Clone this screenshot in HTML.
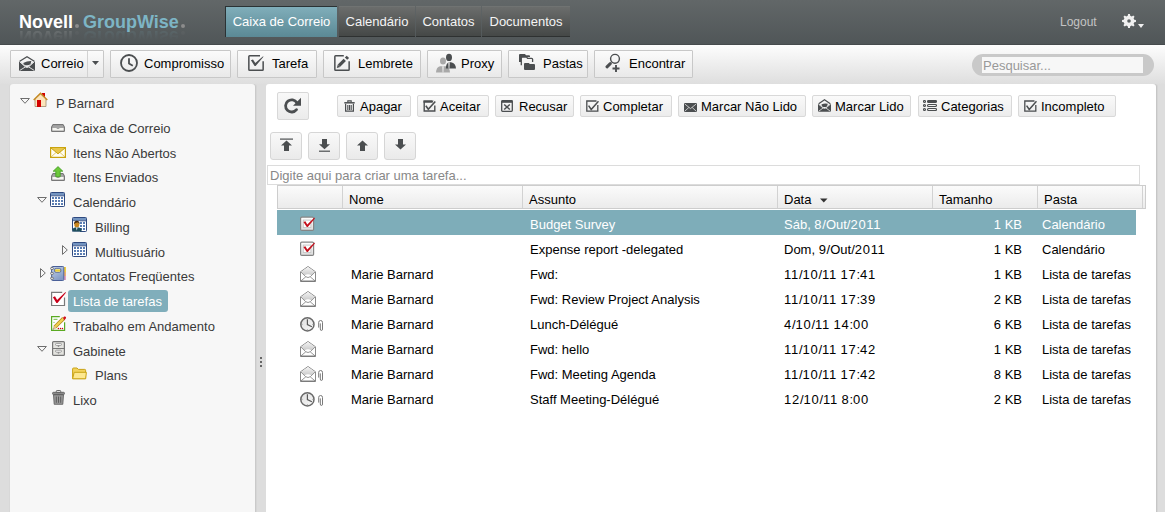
<!DOCTYPE html>
<html><head><meta charset="utf-8">
<style>
*{box-sizing:border-box}
html,body{margin:0;padding:0}
body{width:1165px;height:512px;overflow:hidden;position:relative;background:#dddddd;font-family:"Liberation Sans",sans-serif;font-size:13px;color:#000}
.a{position:absolute}
#hdr{left:0;top:0;width:1165px;height:45px;background:linear-gradient(#626768,#505658);border-bottom:1px solid #464b4d}
.logo{top:12px;font-weight:bold;font-size:18px;white-space:nowrap}
.tab{top:6px;height:31px;line-height:30px;color:#f4f4f4;font-size:13px;text-align:center;white-space:nowrap}
.tab.on{background:linear-gradient(#80aeba,#5b8995);border-left:1px solid #2b3234;border-top:1px solid #2b3234;color:#fff}
.tab.off{background:linear-gradient(#6b6d6c,#454847);border-bottom:1px solid #2e3131;border-top:1px solid #707372}
#tb{left:0;top:45px;width:1165px;height:39px;background:linear-gradient(#fdfdfd,#dedede)}
.btn{height:28px;border:1px solid #c8c8c8;border-radius:1px;background:linear-gradient(#fbfbfb,#e9e9e9);white-space:nowrap;line-height:25px}
.btn span{position:absolute;top:0}
.btn svg{position:absolute}
#left{left:10px;top:84px;width:245px;height:428px;background:#f7f7f7;border-radius:3px 3px 0 0;box-shadow:1px 0 0 #cacaca,2px 0 0 #d6d6d6,-1px 0 0 #d8d8d8}
#main{left:266px;top:84px;width:890px;height:428px;background:#fff;border-radius:3px 3px 0 0;box-shadow:1px 0 0 #c6c6c6,2px 0 0 #d5d5d5}
.ti{position:absolute;color:#3a3a3a;white-space:nowrap;line-height:15px}
.sbtn{height:22px;border:1px solid #d9d9d9;border-radius:2px;background:linear-gradient(#fafafa,#ececec);line-height:20px;white-space:nowrap}
.sbtn span{position:absolute;top:0}
.abtn{top:132px;width:32px;height:28px;border:1px solid #d6d6d6;border-radius:3px;background:linear-gradient(#f9f9f9,#eaeaea)}
.row{position:absolute;left:277px;width:859px;height:25px}
.row.sel{background:#7eadb9}
.c{position:absolute;top:0;line-height:15px;white-space:nowrap}
</style></head><body>
<div id="hdr" class="a"></div>
<div class="a logo" style="left:19px;color:#fff">Novell<span style="display:inline-block;width:4px;height:4px;border-radius:2px;background:#8c8c8c;margin:0 4px 0 2px;vertical-align:0px"></span><span style="color:#7db5c5">GroupWise</span><span style="display:inline-block;width:4px;height:4px;border-radius:2px;background:#8c8c8c;margin:0 0 0 2px;vertical-align:0px"></span></div>
<div class="a tab on" style="left:225px;width:112px">Caixa de Correio</div>
<div class="a tab off" style="left:339px;width:76px">Calendário</div>
<div class="a tab off" style="left:416px;width:65px">Contatos</div>
<div class="a tab off" style="left:482px;width:88px">Documentos</div>
<div class="a" style="left:1060px;top:15px;font-size:12px;color:#c4c4c4">Logout</div>
<svg class="a" style="left:1122px;top:14px" width="14" height="14" viewBox="0 0 14 14"><path d="M6.07 0.06 L7.93 0.06 L8.26 1.75 L9.82 2.40 L11.25 1.44 L12.56 2.75 L11.60 4.18 L12.25 5.74 L13.94 6.07 L13.94 7.93 L12.25 8.26 L11.60 9.82 L12.56 11.25 L11.25 12.56 L9.82 11.60 L8.26 12.25 L7.93 13.94 L6.07 13.94 L5.74 12.25 L4.18 11.60 L2.75 12.56 L1.44 11.25 L2.40 9.82 L1.75 8.26 L0.06 7.93 L0.06 6.07 L1.75 5.74 L2.40 4.18 L1.44 2.75 L2.75 1.44 L4.18 2.40 L5.74 1.75Z M7 5.2A1.8 1.8 0 1 0 7 8.8A1.8 1.8 0 1 0 7 5.2Z" fill="#f0f0f0" fill-rule="evenodd"/></svg><svg class="a" style="left:1138px;top:24px" width="6" height="4"><path d="M0 0H6L3 4Z" fill="#f0f0f0"/></svg>
<div class="a logo" style="left:19px;top:26px;color:#fff;transform:scaleY(-1);transform-origin:50% 50%;opacity:0.13;-webkit-mask-image:linear-gradient(to top,rgba(0,0,0,1) 20%,rgba(0,0,0,0) 68%)">Novell<span style="display:inline-block;width:4px;height:4px;border-radius:2px;background:#8c8c8c;margin:0 4px 0 2px;vertical-align:0px"></span><span style="color:#7db5c5">GroupWise</span><span style="display:inline-block;width:4px;height:4px;border-radius:2px;background:#8c8c8c;margin:0 0 0 2px;vertical-align:0px"></span></div>

<div id="tb" class="a"></div>


<!-- main toolbar -->
<div class="a btn" style="left:10px;top:50px;width:94px"></div>
<div class="a" style="left:87px;top:51px;width:1px;height:26px;background:#d2d2d2"></div>
<svg class="a" style="left:19px;top:56px" width="16" height="15" viewBox="0 0 16 15"><path d="M0.7 5.2 L8 0.8 L15.3 5.2" fill="none" stroke="#4b4e50" stroke-width="1.3"/><path d="M0 4.8 L6.3 10.6 Q8 11.8 9.7 10.6 L16 4.8 L16 15 L0 15Z" fill="#4b4e50"/><path d="M0.5 5.6 L6.4 10.9 Q8 12.1 9.6 10.9 L15.5 5.6 M0.5 14.6 L6.4 10.9 M15.5 14.6 L9.6 10.9" fill="none" stroke="#f2f2f2" stroke-width="0.9"/><path d="M4.2 7 Q8 5 12.3 5.1 L11.5 8.2 Q8.2 10.2 4.9 8.4Z" fill="#4b4e50"/></svg>
<div class="a" style="left:41px;top:56px;line-height:15px">Correio</div>
<svg class="a" style="left:92px;top:61px" width="7" height="4"><path d="M0 0H7L3.5 4Z" fill="#4b4e50"/></svg>

<div class="a btn" style="left:110px;top:50px;width:121px"></div>
<svg class="a" style="left:120px;top:54px" width="18" height="18" viewBox="0 0 18 18"><circle cx="9" cy="9" r="8" fill="none" stroke="#4b4e50" stroke-width="1.8"/><path d="M9 4.2V9.6L12.8 11.8" fill="none" stroke="#4b4e50" stroke-width="1.8"/></svg>
<div class="a" style="left:144px;top:56px;line-height:15px">Compromisso</div>

<div class="a btn" style="left:237px;top:50px;width:80px"></div>
<svg class="a" style="left:248px;top:54px" width="17" height="17" viewBox="0 0 17 17"><path d="M12 1.75H1.6Q0.85 1.75 0.85 2.5V15.4Q0.85 16.15 1.6 16.15H14.4Q15.15 16.15 15.15 15.4V7.2" fill="none" stroke="#4b4e50" stroke-width="1.5"/><path d="M2.9 6.3L5 5.6L7.3 9.1L15.4 2.1L15.1 3.3L7.6 11.9L6.6 12.1Z" fill="#4b4e50"/></svg>
<div class="a" style="left:272px;top:56px;line-height:15px">Tarefa</div>

<div class="a btn" style="left:323px;top:50px;width:98px"></div>
<svg class="a" style="left:334px;top:54px" width="17" height="17" viewBox="0 0 17 17"><path d="M9.8 1.75H1.6Q0.85 1.75 0.85 2.5V15.4Q0.85 16.15 1.6 16.15H14.4Q15.15 16.15 15.15 15.4V7.2" fill="none" stroke="#4b4e50" stroke-width="1.5"/><path d="M5 11.7L10.8 5.9" stroke="#4b4e50" stroke-width="3.3"/><path d="M3.8 10.5L6.2 12.9L2.8 14Z" fill="#4b4e50"/><path d="M12 4.7L13.9 2.8" stroke="#4b4e50" stroke-width="3.3"/></svg>
<div class="a" style="left:358px;top:56px;line-height:15px">Lembrete</div>

<div class="a btn" style="left:427px;top:50px;width:75px"></div>
<svg class="a" style="left:435px;top:53px" width="22" height="21" viewBox="0 0 22 21"><ellipse cx="8" cy="8" rx="3" ry="3.6" fill="#a9a9a9"/><path d="M1 19.6Q1.2 14 5 13.2H11Q14.8 14 15 19.6Z" fill="#a9a9a9"/><path d="M7.3 13.2H8.7L8.4 19.6H7.6Z" fill="#eee"/><ellipse cx="14" cy="4.4" rx="3" ry="3.6" fill="#4b4e50"/><path d="M10.8 15.6Q11 10 14 9.2H16Q20.8 10 21 15.6Z" fill="#4b4e50"/><path d="M13.3 9.2H14.7L14.4 15.6H13.6Z" fill="#eee"/></svg>
<div class="a" style="left:461px;top:56px;line-height:15px">Proxy</div>

<div class="a btn" style="left:508px;top:50px;width:80px"></div>
<svg class="a" style="left:519px;top:54px" width="17" height="16" viewBox="0 0 17 16"><path d="M0 1Q0 0 1 0H6L7 1.2H10Q11 1.2 11 2.2V3H3.5Q2 3 2 4.5V8H0Z" fill="#4b4e50"/><path d="M2.3 11.3V4Q2.3 3 3.3 3H7.6L8.6 4.3H12.6Q13.6 4.3 13.6 5.3V8" fill="none" stroke="#4b4e50" stroke-width="1.3"/><path d="M5 10Q5 9 6 9H9.8L10.8 10H15Q16 10 16 11V15Q16 16 15 16H6Q5 16 5 15Z" fill="#4b4e50"/></svg>
<div class="a" style="left:543px;top:56px;line-height:15px">Pastas</div>

<div class="a btn" style="left:594px;top:50px;width:99px"></div>
<svg class="a" style="left:605px;top:53px" width="16" height="19" viewBox="0 0 16 19"><circle cx="10" cy="5.8" r="4.4" fill="none" stroke="#4b4e50" stroke-width="1.4"/><path d="M2 13.8L5.3 10.6" stroke="#4b4e50" stroke-width="3" stroke-linecap="round"/><path d="M11 12V19M7.5 15.5H14.5" stroke="#4b4e50" stroke-width="1.9"/></svg>
<div class="a" style="left:629px;top:56px;line-height:15px">Encontrar</div>

<div class="a" style="left:972px;top:54px;width:182px;height:22px;border-radius:11px;background:#c9c9c9"></div>
<div class="a" style="left:982px;top:57px;width:161px;height:16px;background:#f7f7f7;color:#999;line-height:18px;padding-left:1px">Pesquisar...</div>

<div id="left" class="a"></div>
<div id="main" class="a"></div>


<!-- content toolbar -->
<div class="a" style="left:277px;top:92px;width:32px;height:28px;border:1px solid #d8d8d8;border-radius:2px;background:linear-gradient(#f8f8f8,#ebebeb)"></div>
<svg class="a" style="left:283px;top:97px" width="19" height="18" viewBox="0 0 19 18"><path d="M13.51 12.66A6.1 6.1 0 1 1 13.87 5.67" fill="none" stroke="#4b4e50" stroke-width="2.8" stroke-linecap="round"/><path d="M18 0.8V8.8H10Z" fill="#4b4e50"/></svg>

<div class="a sbtn" style="left:337px;top:95px;width:74px"></div><svg class="a" style="left:344px;top:100px" width="11" height="12" viewBox="0 0 11 12"><path d="M3.8 2.2V0.9H7.2V2.2" fill="none" stroke="#4b4e50" stroke-width="1.1"/><path d="M0.3 2.8H10.7" stroke="#4b4e50" stroke-width="1.5"/><path d="M1.6 3.8V11.2H9.4V3.8" fill="none" stroke="#4b4e50" stroke-width="1.2"/><path d="M3.8 5V10M5.5 5V10M7.2 5V10" stroke="#4b4e50" stroke-width="1.1"/></svg><div class="a" style="left:360px;top:99px;line-height:15px">Apagar</div>
<div class="a sbtn" style="left:417px;top:95px;width:72px"></div><svg class="a" style="left:423px;top:100px" width="13" height="12" viewBox="0 0 13 12"><path d="M9 1.2H1.2V11H11.8V5.5" fill="none" stroke="#4b4e50" stroke-width="1.4"/><path d="M0.5 0.5H10.5L9.5 2.7H0.5Z" fill="#4b4e50"/><path d="M2.8 5.8L5.3 9.3L12.3 1.5" fill="none" stroke="#4b4e50" stroke-width="1.6"/></svg><div class="a" style="left:440px;top:99px;line-height:15px">Aceitar</div>
<div class="a sbtn" style="left:495px;top:95px;width:79px"></div><svg class="a" style="left:501px;top:100px" width="12" height="12" viewBox="0 0 12 12"><rect x="0.7" y="0.7" width="10.6" height="10.6" rx="0.8" fill="none" stroke="#4b4e50" stroke-width="1.3"/><path d="M0.5 0.5H11.5V2.8H0.5Z" fill="#4b4e50"/><path d="M3.2 4.5L8.8 9.5M8.8 4.5L3.2 9.5" stroke="#4b4e50" stroke-width="1.5"/></svg><div class="a" style="left:519px;top:99px;line-height:15px">Recusar</div>
<div class="a sbtn" style="left:580px;top:95px;width:92px"></div><svg class="a" style="left:586px;top:100px" width="13" height="12" viewBox="0 0 13 12"><path d="M10.5 1H0.8V11.2H11.8V5" fill="none" stroke="#4b4e50" stroke-width="1.3"/><path d="M2.6 5.7L5.2 9.5L12.5 1.2" fill="none" stroke="#4b4e50" stroke-width="1.5"/></svg><div class="a" style="left:603px;top:99px;line-height:15px">Completar</div>
<div class="a sbtn" style="left:678px;top:95px;width:128px"></div><svg class="a" style="left:684px;top:103px" width="13" height="9" viewBox="0 0 13 9"><rect x="0" y="0" width="13" height="9" rx="1" fill="#4b4e50"/><path d="M0.8 1L6.5 5.6L12.2 1M0.8 8.2L4.8 4.5M12.2 8.2L8.2 4.5" fill="none" stroke="#e6e6e6" stroke-width="0.8"/></svg><div class="a" style="left:701px;top:99px;line-height:15px">Marcar Não Lido</div>
<div class="a sbtn" style="left:812px;top:95px;width:99px"></div><svg class="a" style="left:818px;top:99px" width="13" height="13" viewBox="0 0 13 13"><path d="M0.7 4.8L6.5 0.8L12.3 4.8" fill="none" stroke="#4b4e50" stroke-width="1.2"/><path d="M0 4.6L5.2 8.7Q6.5 9.6 7.8 8.7L13 4.6V12.8H0Z" fill="#4b4e50"/><path d="M0.5 5.2L5.2 9Q6.5 9.9 7.8 9L12.5 5.2M0.5 12.4L5 9M12.5 12.4L8 9" fill="none" stroke="#f0f0f0" stroke-width="0.8"/><path d="M3.4 5.6Q6.5 3.8 9.8 4.8L9 7.5Q6.5 8.6 4.1 7.5Z" fill="#4b4e50"/></svg><div class="a" style="left:835px;top:99px;line-height:15px">Marcar Lido</div>
<div class="a sbtn" style="left:918px;top:95px;width:94px"></div><svg class="a" style="left:923px;top:100px" width="14" height="11" viewBox="0 0 14 11"><g fill="none" stroke="#4b4e50" stroke-width="1.1"><circle cx="1.5" cy="1.5" r="1"/><circle cx="1.5" cy="5.5" r="1"/><circle cx="1.5" cy="9.5" r="1"/><rect x="4.5" y="0.5" width="9" height="2" rx="1"/><rect x="4.5" y="4.5" width="9" height="2" rx="1"/><rect x="4.5" y="8.5" width="9" height="2" rx="1"/></g><path d="M5 1.5H13M1.5 5.5H1.6" stroke="#4b4e50" stroke-width="1.4"/></svg><div class="a" style="left:941px;top:99px;line-height:15px">Categorias</div>
<div class="a sbtn" style="left:1018px;top:95px;width:98px"></div><svg class="a" style="left:1024px;top:100px" width="13" height="12" viewBox="0 0 13 12"><path d="M10.5 1H0.8V11.2H11.8V5" fill="none" stroke="#4b4e50" stroke-width="1.3"/><path d="M2.6 5.7L5.2 9.5L12.5 1.2" fill="none" stroke="#4b4e50" stroke-width="1.5"/></svg><div class="a" style="left:1041px;top:99px;line-height:15px">Incompleto</div>

<!-- arrow buttons -->
<div class="a abtn" style="left:270px"></div>
<svg class="a" style="left:279px;top:138px" width="15" height="14" viewBox="0 0 15 14"><path d="M1 1.1H14" stroke="#4b4e50" stroke-width="1.2"/><path d="M7.5 2.4L13 7.4H10V13H5V7.4H2Z" fill="#4b4e50"/></svg>
<div class="a abtn" style="left:308px"></div>
<svg class="a" style="left:317px;top:138px" width="15" height="14" viewBox="0 0 15 14"><path d="M7.5 11.2L13 6.2H10V1H5V6.2H2Z" fill="#4b4e50"/><path d="M2 13.2H13" stroke="#4b4e50" stroke-width="1.2"/></svg>
<div class="a abtn" style="left:346px"></div>
<svg class="a" style="left:355px;top:140px" width="15" height="12" viewBox="0 0 15 12"><path d="M7.5 0.5L13 5.5H10V11H5V5.5H2Z" fill="#4b4e50"/></svg>
<div class="a abtn" style="left:384px"></div>
<svg class="a" style="left:393px;top:139px" width="15" height="12" viewBox="0 0 15 12"><path d="M7.5 10.5L13 5.5H10V0H5V5.5H2Z" fill="#4b4e50"/></svg>

<!-- input -->
<div class="a" style="left:267px;top:165px;width:873px;height:20px;border:1px solid #dcdcdc;background:#fff;color:#888;line-height:19px;padding-left:2px">Digite aqui para criar uma tarefa...</div>


<!-- table header -->
<div class="a" style="left:277px;top:185px;width:869px;height:24px;border:1px solid #cdcdcd;background:linear-gradient(#fbfbfb,#ebebeb)"></div>
<div class="a" style="left:342px;top:186px;width:1px;height:22px;background:#d2d2d2"></div>
<div class="a" style="left:522px;top:186px;width:1px;height:22px;background:#d2d2d2"></div>
<div class="a" style="left:777px;top:186px;width:1px;height:22px;background:#d2d2d2"></div>
<div class="a" style="left:932px;top:186px;width:1px;height:22px;background:#d2d2d2"></div>
<div class="a" style="left:1037px;top:186px;width:1px;height:22px;background:#d2d2d2"></div>
<div class="a" style="left:1142px;top:186px;width:1px;height:22px;background:#d2d2d2"></div>
<div class="a c" style="left:349px;top:192px">Nome</div>
<div class="a c" style="left:529px;top:192px">Assunto</div>
<div class="a c" style="left:784px;top:192px">Data</div>
<svg class="a" style="left:820px;top:198px" width="8" height="5"><path d="M0 0.5H7.5L3.75 4.5Z" fill="#333"/></svg>
<div class="a c" style="left:939px;top:192px">Tamanho</div>
<div class="a c" style="left:1044px;top:192px">Pasta</div>
<svg width="0" height="0" style="position:absolute"><defs><linearGradient id="gchk" x1="0" y1="0" x2="0" y2="1"><stop offset="0" stop-color="#fff"/><stop offset="1" stop-color="#dcdcdc"/></linearGradient><linearGradient id="genv" x1="0" y1="0" x2="0" y2="1"><stop offset="0" stop-color="#f4f4f4"/><stop offset="1" stop-color="#c8c8c8"/></linearGradient><linearGradient id="gclk" x1="0" y1="0" x2="1" y2="1"><stop offset="0" stop-color="#e0e0e0"/><stop offset="1" stop-color="#f8f8f8"/></linearGradient></defs></svg>
<div class="a" style="left:277px;top:210px;width:859px;height:25px;background:#7eadb9"></div>
<svg class="a" style="left:300px;top:216px" width="16" height="16" viewBox="0 0 16 16"><rect x="0.6" y="1.1" width="13" height="13.3" rx="1.2" fill="url(#gchk)" stroke="#858585" stroke-width="1.2"/><rect x="3.3" y="4.1" width="7.6" height="7.5" fill="#fff" stroke="#c4c4c4" stroke-width="0.9"/><path d="M3.4 6.1L5.4 5.3L7.3 8.6L14.4 1.5L14.9 2.4L7.8 10.9L6.8 11Z" fill="#c4101c"/></svg>
<div class="a c" style="left:530px;top:217px;color:#fff">Budget Survey</div>
<div class="a c" style="left:784px;top:217px;color:#fff">Sáb, <span style="letter-spacing:0.7px">8</span>/Out/<span style="letter-spacing:0.7px">2011</span></div>
<div class="a c" style="left:960px;width:62px;text-align:right;top:217px;color:#fff">1 KB</div>
<div class="a c" style="left:1042px;top:217px;color:#fff">Calendário</div>
<svg class="a" style="left:300px;top:241px" width="16" height="16" viewBox="0 0 16 16"><rect x="0.6" y="1.1" width="13" height="13.3" rx="1.2" fill="url(#gchk)" stroke="#858585" stroke-width="1.2"/><rect x="3.3" y="4.1" width="7.6" height="7.5" fill="#fff" stroke="#c4c4c4" stroke-width="0.9"/><path d="M3.4 6.1L5.4 5.3L7.3 8.6L14.4 1.5L14.9 2.4L7.8 10.9L6.8 11Z" fill="#c4101c"/></svg>
<div class="a c" style="left:530px;top:242px;color:#000">Expense report -delegated</div>
<div class="a c" style="left:784px;top:242px;color:#000">Dom, <span style="letter-spacing:0.7px">9</span>/Out/<span style="letter-spacing:0.7px">2011</span></div>
<div class="a c" style="left:960px;width:62px;text-align:right;top:242px;color:#000">1 KB</div>
<div class="a c" style="left:1042px;top:242px;color:#000">Calendário</div>
<svg class="a" style="left:300px;top:266px" width="16" height="16" viewBox="0 0 16 16"><path d="M0.5 5.8L8 0.5L15.5 5.8V15.3H0.5Z" fill="#fff" stroke="#8a8a8a" stroke-width="1"/><path d="M1 5.9L8 1.1L15 5.9L11.5 9.6Q8 7 4.5 9.6Z" fill="url(#genv)"/><path d="M0.8 5.9L5.6 10.6Q8 12.5 10.4 10.6L15.2 5.9M0.8 15L5.8 10.8M15.2 15L10.2 10.8" fill="none" stroke="#8c8c8c" stroke-width="0.9"/><path d="M0.5 15.2H15.5" stroke="#6a6a6a" stroke-width="1"/></svg>
<div class="a c" style="left:351px;top:267px;color:#000">Marie Barnard</div>
<div class="a c" style="left:530px;top:267px;color:#000">Fwd:</div>
<div class="a c" style="left:784px;top:267px;color:#000"><span style="letter-spacing:0.7px">11</span>/<span style="letter-spacing:0.7px">10</span>/<span style="letter-spacing:0.7px">11</span> <span style="letter-spacing:0.7px">17</span>:<span style="letter-spacing:0.7px">41</span></div>
<div class="a c" style="left:960px;width:62px;text-align:right;top:267px;color:#000">1 KB</div>
<div class="a c" style="left:1042px;top:267px;color:#000">Lista de tarefas</div>
<svg class="a" style="left:300px;top:291px" width="16" height="16" viewBox="0 0 16 16"><path d="M0.5 5.8L8 0.5L15.5 5.8V15.3H0.5Z" fill="#fff" stroke="#8a8a8a" stroke-width="1"/><path d="M1 5.9L8 1.1L15 5.9L11.5 9.6Q8 7 4.5 9.6Z" fill="url(#genv)"/><path d="M0.8 5.9L5.6 10.6Q8 12.5 10.4 10.6L15.2 5.9M0.8 15L5.8 10.8M15.2 15L10.2 10.8" fill="none" stroke="#8c8c8c" stroke-width="0.9"/><path d="M0.5 15.2H15.5" stroke="#6a6a6a" stroke-width="1"/></svg>
<div class="a c" style="left:351px;top:292px;color:#000">Marie Barnard</div>
<div class="a c" style="left:530px;top:292px;color:#000">Fwd: Review Project Analysis</div>
<div class="a c" style="left:784px;top:292px;color:#000"><span style="letter-spacing:0.7px">11</span>/<span style="letter-spacing:0.7px">10</span>/<span style="letter-spacing:0.7px">11</span> <span style="letter-spacing:0.7px">17</span>:<span style="letter-spacing:0.7px">39</span></div>
<div class="a c" style="left:960px;width:62px;text-align:right;top:292px;color:#000">2 KB</div>
<div class="a c" style="left:1042px;top:292px;color:#000">Lista de tarefas</div>
<svg class="a" style="left:300px;top:317px" width="16" height="15" viewBox="0 0 16 15"><circle cx="7.4" cy="7.4" r="6.6" fill="url(#gclk)" stroke="#6a6a6a" stroke-width="1.5"/><path d="M7.4 12.3V13.4M12.3 7.4H13.4M1.4 7.4H2.5" stroke="#888" stroke-width="0.8"/><path d="M7.4 2.2V7.6L11.9 9.8" fill="none" stroke="#5a5a5a" stroke-width="1.2"/></svg>
<svg class="a" style="left:318px;top:320px" width="6" height="11" viewBox="0 0 6 11"><path d="M0.7 7.6V2.4Q0.7 0.5 2.6 0.5Q4.5 0.5 4.5 2.4V9Q4.5 10.5 3.4 10.5Q2.3 10.5 2.3 9V3.4" fill="none" stroke="#7a7a7a" stroke-width="1"/></svg>
<div class="a c" style="left:351px;top:317px;color:#000">Marie Barnard</div>
<div class="a c" style="left:530px;top:317px;color:#000">Lunch-Délégué</div>
<div class="a c" style="left:784px;top:317px;color:#000"><span style="letter-spacing:0.7px">4</span>/<span style="letter-spacing:0.7px">10</span>/<span style="letter-spacing:0.7px">11</span> <span style="letter-spacing:0.7px">14</span>:<span style="letter-spacing:0.7px">00</span></div>
<div class="a c" style="left:960px;width:62px;text-align:right;top:317px;color:#000">6 KB</div>
<div class="a c" style="left:1042px;top:317px;color:#000">Lista de tarefas</div>
<svg class="a" style="left:300px;top:341px" width="16" height="16" viewBox="0 0 16 16"><path d="M0.5 5.8L8 0.5L15.5 5.8V15.3H0.5Z" fill="#fff" stroke="#8a8a8a" stroke-width="1"/><path d="M1 5.9L8 1.1L15 5.9L11.5 9.6Q8 7 4.5 9.6Z" fill="url(#genv)"/><path d="M0.8 5.9L5.6 10.6Q8 12.5 10.4 10.6L15.2 5.9M0.8 15L5.8 10.8M15.2 15L10.2 10.8" fill="none" stroke="#8c8c8c" stroke-width="0.9"/><path d="M0.5 15.2H15.5" stroke="#6a6a6a" stroke-width="1"/></svg>
<div class="a c" style="left:351px;top:342px;color:#000">Marie Barnard</div>
<div class="a c" style="left:530px;top:342px;color:#000">Fwd: hello</div>
<div class="a c" style="left:784px;top:342px;color:#000"><span style="letter-spacing:0.7px">11</span>/<span style="letter-spacing:0.7px">10</span>/<span style="letter-spacing:0.7px">11</span> <span style="letter-spacing:0.7px">17</span>:<span style="letter-spacing:0.7px">42</span></div>
<div class="a c" style="left:960px;width:62px;text-align:right;top:342px;color:#000">1 KB</div>
<div class="a c" style="left:1042px;top:342px;color:#000">Lista de tarefas</div>
<svg class="a" style="left:300px;top:366px" width="16" height="16" viewBox="0 0 16 16"><path d="M0.5 5.8L8 0.5L15.5 5.8V15.3H0.5Z" fill="#fff" stroke="#8a8a8a" stroke-width="1"/><path d="M1 5.9L8 1.1L15 5.9L11.5 9.6Q8 7 4.5 9.6Z" fill="url(#genv)"/><path d="M0.8 5.9L5.6 10.6Q8 12.5 10.4 10.6L15.2 5.9M0.8 15L5.8 10.8M15.2 15L10.2 10.8" fill="none" stroke="#8c8c8c" stroke-width="0.9"/><path d="M0.5 15.2H15.5" stroke="#6a6a6a" stroke-width="1"/></svg>
<svg class="a" style="left:318px;top:370px" width="6" height="11" viewBox="0 0 6 11"><path d="M0.7 7.6V2.4Q0.7 0.5 2.6 0.5Q4.5 0.5 4.5 2.4V9Q4.5 10.5 3.4 10.5Q2.3 10.5 2.3 9V3.4" fill="none" stroke="#7a7a7a" stroke-width="1"/></svg>
<div class="a c" style="left:351px;top:367px;color:#000">Marie Barnard</div>
<div class="a c" style="left:530px;top:367px;color:#000">Fwd: Meeting Agenda</div>
<div class="a c" style="left:784px;top:367px;color:#000"><span style="letter-spacing:0.7px">11</span>/<span style="letter-spacing:0.7px">10</span>/<span style="letter-spacing:0.7px">11</span> <span style="letter-spacing:0.7px">17</span>:<span style="letter-spacing:0.7px">42</span></div>
<div class="a c" style="left:960px;width:62px;text-align:right;top:367px;color:#000">8 KB</div>
<div class="a c" style="left:1042px;top:367px;color:#000">Lista de tarefas</div>
<svg class="a" style="left:300px;top:392px" width="16" height="15" viewBox="0 0 16 15"><circle cx="7.4" cy="7.4" r="6.6" fill="url(#gclk)" stroke="#6a6a6a" stroke-width="1.5"/><path d="M7.4 12.3V13.4M12.3 7.4H13.4M1.4 7.4H2.5" stroke="#888" stroke-width="0.8"/><path d="M7.4 2.2V7.6L11.9 9.8" fill="none" stroke="#5a5a5a" stroke-width="1.2"/></svg>
<svg class="a" style="left:318px;top:395px" width="6" height="11" viewBox="0 0 6 11"><path d="M0.7 7.6V2.4Q0.7 0.5 2.6 0.5Q4.5 0.5 4.5 2.4V9Q4.5 10.5 3.4 10.5Q2.3 10.5 2.3 9V3.4" fill="none" stroke="#7a7a7a" stroke-width="1"/></svg>
<div class="a c" style="left:351px;top:392px;color:#000">Marie Barnard</div>
<div class="a c" style="left:530px;top:392px;color:#000">Staff Meeting-Délégué</div>
<div class="a c" style="left:784px;top:392px;color:#000"><span style="letter-spacing:0.7px">12</span>/<span style="letter-spacing:0.7px">10</span>/<span style="letter-spacing:0.7px">11</span> <span style="letter-spacing:0.7px">8</span>:<span style="letter-spacing:0.7px">00</span></div>
<div class="a c" style="left:960px;width:62px;text-align:right;top:392px;color:#000">2 KB</div>
<div class="a c" style="left:1042px;top:392px;color:#000">Lista de tarefas</div>
<!-- tree -->
<svg class="a" style="left:20px;top:98px" width="10" height="6" viewBox="0 0 10 6"><path d="M0.6 0.5H9.4L5 5.3Z" fill="none" stroke="#6e6e6e" stroke-width="1"/></svg>
<svg class="a" style="left:33px;top:92px" width="15" height="15" viewBox="0 0 15 15"><rect x="9" y="1" width="3" height="5" fill="#d40000"/><path d="M2 7L7.5 1.8L13 7V14.5H2Z" fill="#fde4bb" stroke="#a08a70" stroke-width="0.8"/><path d="M0.7 8L7.5 1.2L14.3 8" fill="none" stroke="#c58a22" stroke-width="1.5"/><rect x="4" y="8" width="4" height="7" fill="#d30000"/></svg>
<div class="ti" style="left:56px;top:96px">P Barnard</div>

<svg class="a" style="left:51px;top:124px" width="14" height="8" viewBox="0 0 14 8"><path d="M1.8 0.6H12.2L13.4 3V7.4H0.6V3Z" fill="#a4a4a4" stroke="#6e6e6e" stroke-width="1"/><path d="M1.4 4H5.2L6.2 5H7.8L8.8 4H12.6V6.6H1.4Z" fill="#f6f6f2"/></svg>
<div class="ti" style="left:73px;top:121px">Caixa de Correio</div>

<svg class="a" style="left:50px;top:147px" width="16" height="11" viewBox="0 0 16 11"><rect x="0.6" y="0.6" width="14.8" height="9.8" fill="#fffdf2" stroke="#c9a30f" stroke-width="1.2"/><path d="M1 1L8 6.8L15 1Z" fill="#e8c64a"/><path d="M1 1L8 6.8L15 1" fill="none" stroke="#c9a30f" stroke-width="1"/><path d="M1 10L6 5.5M15 10L10 5.5" stroke="#d8bb45" stroke-width="0.8"/></svg>
<div class="ti" style="left:73px;top:146px">Itens Não Abertos</div>

<svg class="a" style="left:51px;top:166px" width="14" height="15" viewBox="0 0 14 15"><path d="M1.8 7.6H12.2L13.4 10V14.4H0.6V10Z" fill="#a4a4a4" stroke="#6e6e6e" stroke-width="1"/><path d="M1.4 11H5.2L6.2 12H7.8L8.8 11H12.6V13.6H1.4Z" fill="#f6f6f2"/><path d="M7 0.6L11.8 5.2H9.2V10.8H4.8V5.2H2.2Z" fill="#6cc83a" stroke="#3f9a1e" stroke-width="0.8"/></svg>
<div class="ti" style="left:73px;top:170px">Itens Enviados</div>

<svg class="a" style="left:37px;top:197px" width="10" height="6" viewBox="0 0 10 6"><path d="M0.6 0.5H9.4L5 5.3Z" fill="none" stroke="#6e6e6e" stroke-width="1"/></svg>
<svg class="a" style="left:50px;top:192px" width="15" height="15" viewBox="0 0 15 15"><rect x="0.5" y="0.5" width="14" height="14" rx="0.8" fill="#fff" stroke="#2f4a80"/><rect x="1" y="1" width="13" height="2.6" fill="#7394c0"/><rect x="1" y="3.4" width="13" height="0.9" fill="#2f4a80"/><g fill="#5a7db3"><rect x="2" y="5" width="2" height="2"/><rect x="5" y="5" width="2" height="2"/><rect x="8" y="5" width="2" height="2"/><rect x="11" y="5" width="2" height="2"/><rect x="2" y="8" width="2" height="2"/><rect x="5" y="8" width="2" height="2"/><rect x="8" y="8" width="2" height="2"/><rect x="11" y="8" width="2" height="2"/><rect x="2" y="11" width="2" height="2"/><rect x="5" y="11" width="2" height="2"/><rect x="8" y="11" width="2" height="2"/><rect x="11" y="11" width="2" height="2"/></g></svg>
<div class="ti" style="left:73px;top:195px">Calendário</div>

<svg class="a" style="left:72px;top:217px" width="15" height="15" viewBox="0 0 15 15"><rect x="0.5" y="0.5" width="14" height="14" rx="0.8" fill="#fff" stroke="#2f4a80"/><rect x="1" y="1" width="13" height="2.6" fill="#7394c0"/><rect x="1" y="3.4" width="13" height="0.9" fill="#2f4a80"/><g fill="#5a7db3"><rect x="2" y="5" width="2" height="2"/><rect x="5" y="5" width="2" height="2"/><rect x="8" y="5" width="2" height="2"/><rect x="11" y="5" width="2" height="2"/><rect x="2" y="8" width="2" height="2"/><rect x="5" y="8" width="2" height="2"/><rect x="8" y="8" width="2" height="2"/><rect x="11" y="8" width="2" height="2"/><rect x="2" y="11" width="2" height="2"/><rect x="5" y="11" width="2" height="2"/><rect x="8" y="11" width="2" height="2"/><rect x="11" y="11" width="2" height="2"/></g></svg>
<svg class="a" style="left:72px;top:217px" width="15" height="15" viewBox="0 0 15 15"><rect x="1" y="4.3" width="7" height="10.2" fill="#fff"/><path d="M0.6 14.4V11.8Q1.5 10.2 4.8 9.9Q8.2 10.2 9.6 11.8V14.4Z" fill="#1f4f5c"/><path d="M3.9 10.3H5.7L4.8 13.4Z" fill="#f4f4f4"/><ellipse cx="4.8" cy="7.7" rx="2.5" ry="2.6" fill="#c8861e"/><path d="M2 7.2Q1.8 4 4.8 3.7Q7.8 4 7.6 7.2Q7 5.8 5.6 5.6Q3.5 5.4 2 7.2Z" fill="#4a2a08"/></svg>
<div class="ti" style="left:95px;top:220px">Billing</div>

<svg class="a" style="left:62px;top:245px" width="6" height="10" viewBox="0 0 6 10"><path d="M0.5 0.6V9.4L5.3 5Z" fill="none" stroke="#6e6e6e" stroke-width="1"/></svg>
<svg class="a" style="left:72px;top:242px" width="15" height="15" viewBox="0 0 15 15"><rect x="0.5" y="0.5" width="14" height="14" rx="0.8" fill="#fff" stroke="#2f4a80"/><rect x="1" y="1" width="13" height="2.6" fill="#7394c0"/><rect x="1" y="3.4" width="13" height="0.9" fill="#2f4a80"/><g fill="#5a7db3"><rect x="2" y="5" width="2" height="2"/><rect x="5" y="5" width="2" height="2"/><rect x="8" y="5" width="2" height="2"/><rect x="11" y="5" width="2" height="2"/><rect x="2" y="8" width="2" height="2"/><rect x="5" y="8" width="2" height="2"/><rect x="8" y="8" width="2" height="2"/><rect x="11" y="8" width="2" height="2"/><rect x="2" y="11" width="2" height="2"/><rect x="5" y="11" width="2" height="2"/><rect x="8" y="11" width="2" height="2"/><rect x="11" y="11" width="2" height="2"/></g></svg>
<div class="ti" style="left:95px;top:245px">Multiusuário</div>

<svg class="a" style="left:40px;top:268px" width="6" height="10" viewBox="0 0 6 10"><path d="M0.5 0.6V9.4L5.3 5Z" fill="none" stroke="#6e6e6e" stroke-width="1"/></svg>
<svg class="a" style="left:50px;top:266px" width="17" height="15" viewBox="0 0 17 15"><defs><linearGradient id="gbook" x1="0" y1="0" x2="0.6" y2="1"><stop offset="0" stop-color="#c3d2ea"/><stop offset="1" stop-color="#8299c4"/></linearGradient><linearGradient id="glab" x1="0" y1="0" x2="0" y2="1"><stop offset="0" stop-color="#fffbd0"/><stop offset="0.5" stop-color="#e8cc30"/><stop offset="1" stop-color="#fff0a0"/></linearGradient></defs><rect x="14" y="1" width="2" height="5" fill="#f2d040"/><rect x="14" y="6" width="2" height="4" fill="#f0b070"/><rect x="14" y="10" width="2" height="4" fill="#e0a0c0"/><rect x="1.6" y="0.5" width="12.2" height="14" rx="1" fill="url(#gbook)" stroke="#4a6098"/><rect x="4.5" y="2.4" width="6.4" height="4" rx="1.6" fill="url(#glab)" stroke="#4a6098" stroke-width="0.8"/><g fill="#e8e8e8" stroke="#6a6a6a" stroke-width="0.8"><ellipse cx="2" cy="2.5" rx="1.6" ry="1.1"/><ellipse cx="2" cy="7.4" rx="1.6" ry="1.1"/><ellipse cx="2" cy="12.3" rx="1.6" ry="1.1"/></g></svg>
<div class="ti" style="left:73px;top:269px">Contatos Freqüentes</div>

<div class="a" style="left:68px;top:290px;width:100px;height:22px;border-radius:3px;background:#80aebb"></div>
<svg class="a" style="left:51px;top:291px" width="16" height="15" viewBox="0 0 16 15"><path d="M11.2 1.4H0.6V14.5H13.5V6.4" fill="#fff" stroke="#7a7a7a" stroke-width="1.2"/><path d="M1.9 6.3L4 5.2L6.1 9.1L14.5 0.9L14.9 1.7L6.5 12L5.4 12.1Z" fill="#c8001a"/></svg>
<div class="ti" style="left:73px;top:294px;color:#fff">Lista de tarefas</div>

<svg class="a" style="left:51px;top:316px" width="16" height="15" viewBox="0 0 16 15"><path d="M8.8 0.6H0.6V14.4H13.6V6.2" fill="#fff" stroke="#5aaa22" stroke-width="1.2"/><path d="M2.5 3.3H6.5M2.5 6.4H3.5" stroke="#6cba40" stroke-width="1"/><g fill="#d00010"><circle cx="7.4" cy="12.4" r="0.75"/><circle cx="9.5" cy="12.4" r="0.75"/><circle cx="11.5" cy="12.4" r="0.75"/></g><path d="M4 11L12.6 2.4" stroke="#b08a20" stroke-width="3.8"/><path d="M4 11L12.6 2.4" stroke="#f0d050" stroke-width="2.2"/><path d="M2.6 9.6L5.4 12.4L1.8 13.4Z" fill="#d8c090"/><path d="M1.9 12.3L2.9 13.2L1.8 13.4Z" fill="#444"/><path d="M12 1.8L13.2 0.6Q14.4 0 15 1.2Q15.4 2 14.4 3L13.2 4.2Z" fill="#d01020"/></svg>
<div class="ti" style="left:73px;top:319px">Trabalho em Andamento</div>

<svg class="a" style="left:37px;top:346px" width="10" height="6" viewBox="0 0 10 6"><path d="M0.6 0.5H9.4L5 5.3Z" fill="none" stroke="#6e6e6e" stroke-width="1"/></svg>
<svg class="a" style="left:52px;top:341px" width="13" height="15" viewBox="0 0 13 15"><rect x="0.6" y="0.6" width="11.8" height="13.8" rx="1" fill="#e4e4e0" stroke="#777" stroke-width="1.2"/><path d="M0.6 7.5H12.4" stroke="#777" stroke-width="1"/><rect x="3.6" y="2.4" width="5.8" height="2" rx="0.8" fill="#fff" stroke="#888" stroke-width="0.8"/><rect x="3.6" y="9.2" width="5.8" height="2" rx="0.8" fill="#fff" stroke="#888" stroke-width="0.8"/><path d="M5.8 5.2H7.2M5.8 12H7.2" stroke="#666" stroke-width="0.9"/></svg>
<div class="ti" style="left:73px;top:344px">Gabinete</div>

<svg class="a" style="left:72px;top:367px" width="15" height="13" viewBox="0 0 15 13"><path d="M0.6 2Q0.6 1 1.6 1H5L6.3 2.4H12.8Q13.6 2.4 13.6 3.2V11.6H0.6Z" fill="#f3d25c" stroke="#c9a316" stroke-width="1"/><path d="M2.2 5.3H14.4L13.6 11.8H0.6Z" fill="#fde890" stroke="#c9a316" stroke-width="1"/></svg>
<div class="ti" style="left:95px;top:368px">Plans</div>

<svg class="a" style="left:52px;top:390px" width="13" height="15" viewBox="0 0 13 15"><rect x="4.3" y="0.5" width="4.4" height="2" rx="0.8" fill="none" stroke="#666" stroke-width="1"/><rect x="0.5" y="2.3" width="12" height="2.2" rx="1" fill="#8a8a8a" stroke="#555" stroke-width="0.8"/><path d="M1.5 4.8H11.5L10.8 14.3H2.2Z" fill="#9a9a9a" stroke="#555" stroke-width="0.8"/><path d="M4.3 6.5V12.8M6.5 6.5V12.8M8.7 6.5V12.8" stroke="#555" stroke-width="0.9"/></svg>
<div class="ti" style="left:73px;top:393px">Lixo</div>

<div class="a" style="left:260px;top:357px;width:2px;height:2px;background:#666"></div><div class="a" style="left:260px;top:361px;width:2px;height:2px;background:#666"></div><div class="a" style="left:260px;top:365px;width:2px;height:2px;background:#666"></div>
</body></html>
